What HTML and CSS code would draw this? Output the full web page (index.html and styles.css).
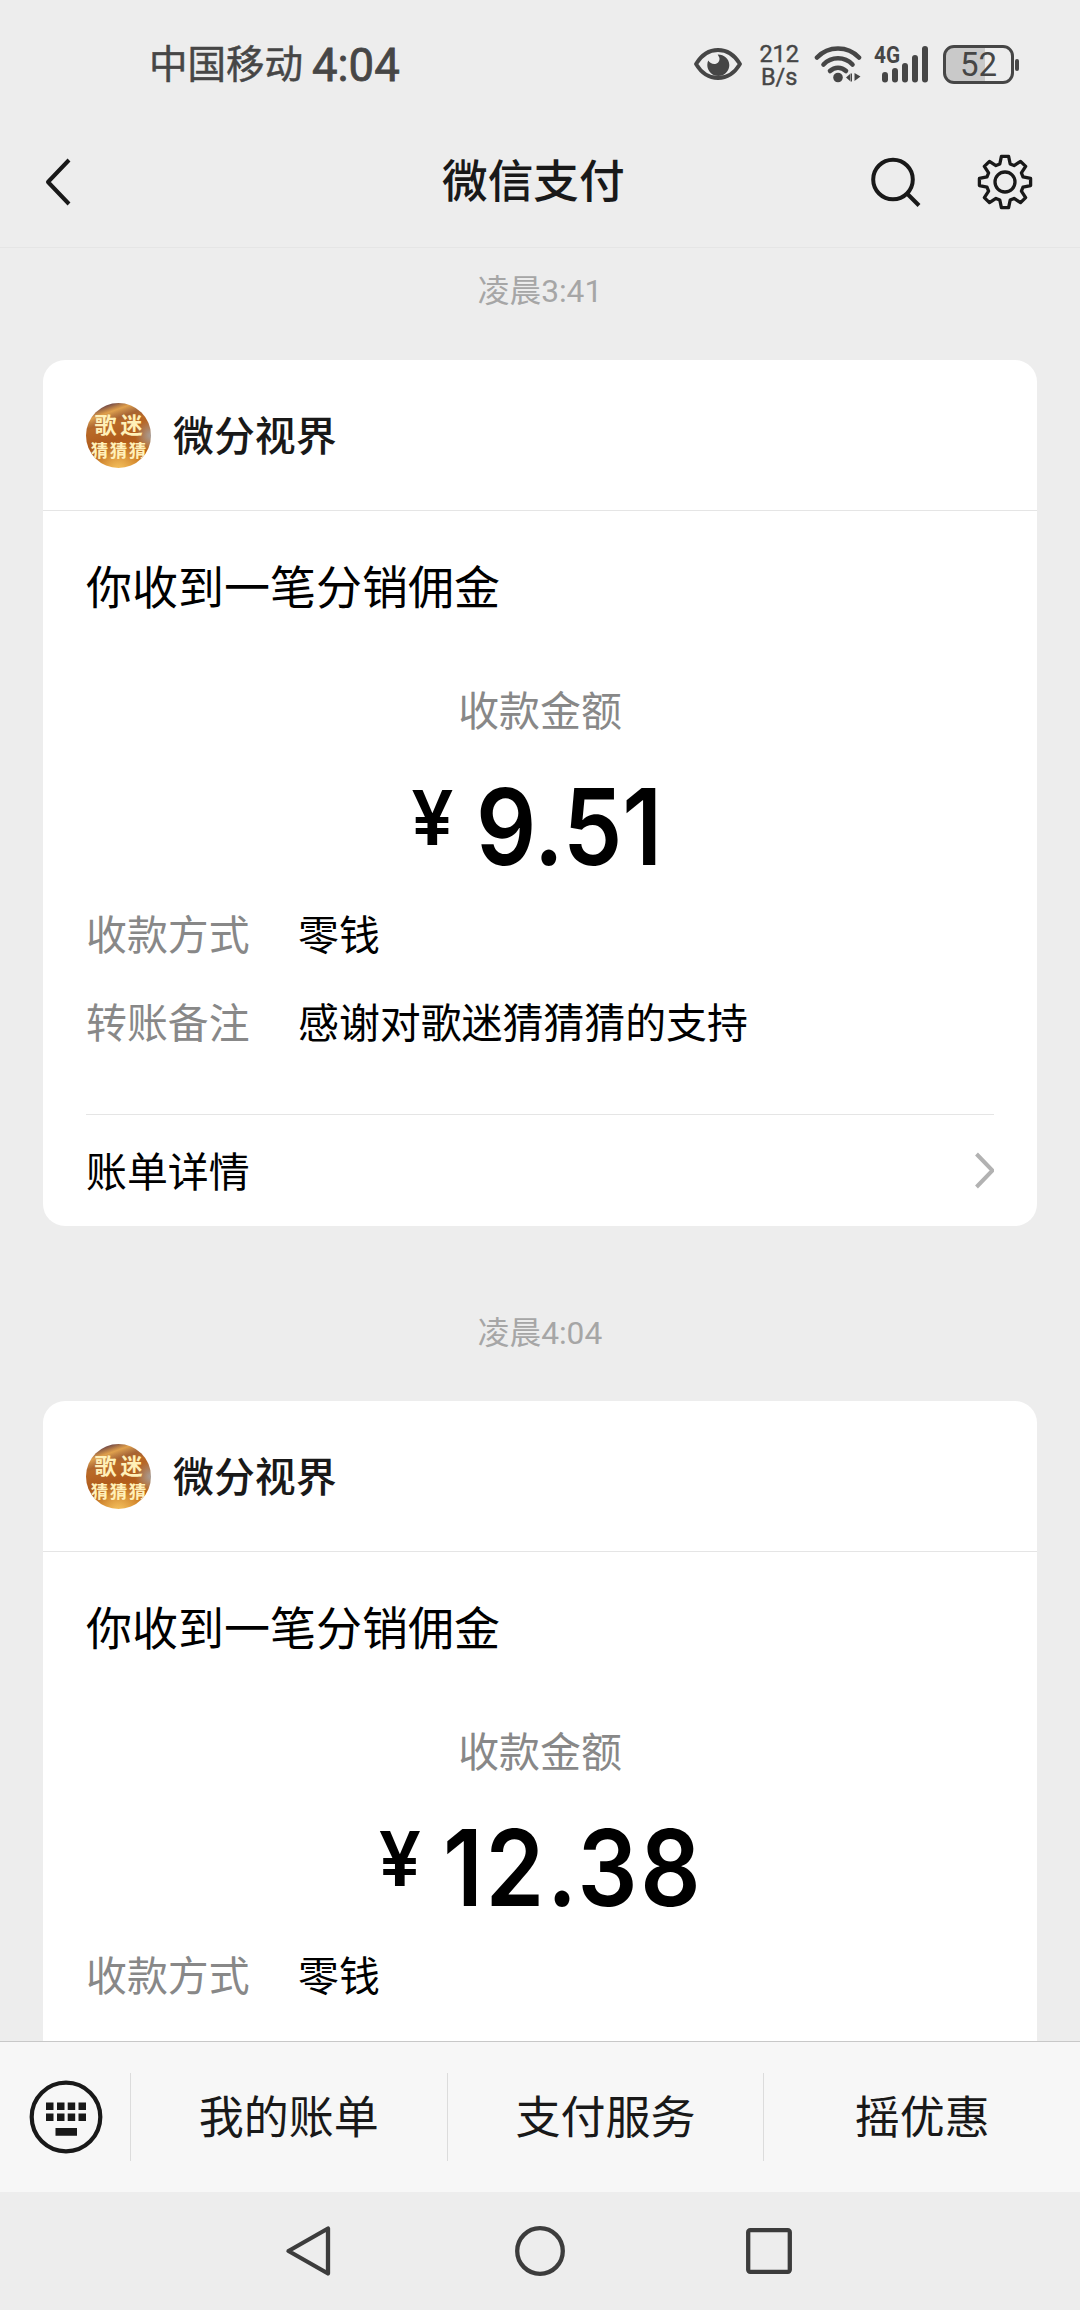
FILE: index.html
```html
<!DOCTYPE html>
<html lang="zh-CN">
<head>
<meta charset="utf-8">
<title>微信支付</title>
<link rel="stylesheet" href="styles.css">
</head>
<body>
<div class="screen">
  <div class="status-bar">
    <span class="carrier">中国移动</span>
    <span class="clock">4:04</span>
    <div class="status-icons">
      <svg class="eye" width="48" height="34" viewBox="0 0 48 34"><path d="M2 17C8 7 15 3 24 3s16 4 22 14c-6 10-13 14-22 14S8 27 2 17z" fill="none" stroke="#464646" stroke-width="3.8" stroke-linejoin="round"/><path d="M24 7.500c-1 0 1.500 2 1.500 4.200 0 3.300-2.600 5.300-5.300 5.300-2.400 0-4.500-1.300-6-3.500-.6 1.600-.9 3-.9 4.500a11 11 0 0 0 22 0C35.300 12 30 7.500 24 7.500z" fill="#464646"/></svg>
      <div class="speed"><span>212</span><span>B/s</span></div>
      <svg class="wifi" width="50" height="38" viewBox="0 0 50 38"><g fill="none" stroke="#464646" stroke-width="4.600" stroke-linecap="round"><path d="M3 12.500a29 29 0 0 1 42 0"/><path d="M9.500 19.500a20 20 0 0 1 29 0"/><path d="M16 26a11.500 11.500 0 0 1 16 0"/></g><circle cx="24" cy="32.500" r="4.800" fill="#464646"/><path d="M32 32.500l4-3.500v7zM38 28.500v8h-1.500v-8zM40.500 28l6 3.500-6 4.500z" fill="#464646"/></svg>
      <div class="signal">
        <span class="net">4G</span>
        <svg width="47" height="37" viewBox="0 0 47 37"><g stroke="#464646" stroke-width="6" stroke-linecap="round"><path d="M3 29v4.500M13 25v8.500M23 20v13.500M33 12v21.500M43 3v30.500"/></g></svg>
      </div>
      <div class="battery"><span>52</span></div>
    </div>
  </div>

  <header class="nav-bar">
    <svg class="back" width="28" height="50" viewBox="0 0 28 50"><path d="M25 3L4 25l21 22" fill="none" stroke="#191919" stroke-width="4" stroke-linejoin="round"/></svg>
    <h1>微信支付</h1>
    <svg class="search" width="54" height="54" viewBox="0 0 54 54"><circle cx="24" cy="24.500" r="19.800" fill="none" stroke="#191919" stroke-width="4"/><path d="M38 38.500l12 12" stroke="#191919" stroke-width="4"/></svg>
    <svg class="gear" width="58" height="58" viewBox="-29 -29 58 58"><g fill="none" stroke="#191919" stroke-width="3.300" stroke-linejoin="round"><path d="M-5.200-18L-3.600-25.600H3.600L5.200-18 9.050-16.400 15.560-20.650 20.650-15.560 16.400-9.050 18-5.200 25.600-3.600V3.600L18 5.200 16.400 9.050 20.650 15.560 15.560 20.650 9.050 16.400 5.200 18 3.600 25.600H-3.600L-5.200 18-9.050 16.400-15.560 20.650-20.650 15.560-16.400 9.050-18 5.200-25.600 3.600V-3.600L-18-5.200-16.400-9.050-20.650-15.560-15.560-20.650-9.050-16.400z"/><circle r="10"/></g></svg>
  </header>

  <main class="chat">
    <div class="time">凌晨3:41</div>
    <section class="card">
      <div class="merchant"><div class="avatar"><span>歌迷</span><span class="avatar-sub">猜猜猜</span></div><h2>微分视界</h2></div>
      <p class="desc">你收到一笔分销佣金</p>
      <p class="label-amount">收款金额</p>
      <div class="amount"><span class="yen">¥</span><span class="digits">9.51</span></div>
      <dl class="rows">
        <dt>收款方式</dt><dd>零钱</dd>
        <dt>转账备注</dt><dd>感谢对歌迷猜猜猜的支持</dd>
      </dl>
      <div class="detail"><span>账单详情</span><svg width="20" height="38" viewBox="0 0 20 38"><path d="M2.500 3l16 16.500L2.500 36" fill="none" stroke="#b2b2b2" stroke-width="4"/></svg></div>
    </section>
    <div class="time later">凌晨4:04</div>
    <section class="card">
      <div class="merchant"><div class="avatar"><span>歌迷</span><span class="avatar-sub">猜猜猜</span></div><h2>微分视界</h2></div>
      <p class="desc">你收到一笔分销佣金</p>
      <p class="label-amount">收款金额</p>
      <div class="amount"><span class="yen">¥</span><span class="digits wide">12.38</span></div>
      <dl class="rows">
        <dt>收款方式</dt><dd>零钱</dd>
      </dl>
    </section>
  </main>

  <footer class="menu">
    <div class="keyboard"><svg width="74" height="74" viewBox="0 0 74 74"><circle cx="37" cy="37" r="34.300" fill="none" stroke="#191919" stroke-width="4.200"/><path d="M17 22.500h7.500v7.500H17zM28 22.500h7.500v7.500H28zM38.700 22.500h7.500v7.500h-7.500zM49.500 22.500H57v7.500h-7.500zM17 33.500h7.500v7.500H17zM28 33.500h7.500v7.500H28zM38.700 33.500h7.500v7.500h-7.500zM49.500 33.500H57v7.500h-7.500zM26.500 48H48v7.800H26.500z" fill="#191919"/></svg></div>
    <div class="menu-item">我的账单</div>
    <div class="menu-item">支付服务</div>
    <div class="menu-item">摇优惠</div>
  </footer>

  <div class="system-nav">
    <svg width="52" height="52" viewBox="0 0 52 52"><path d="M43 3.500v45L3.500 26z" fill="none" stroke="#3c3c3c" stroke-width="4.300" stroke-linejoin="round"/></svg>
    <svg width="52" height="52" viewBox="0 0 52 52"><circle cx="26" cy="26" r="22.800" fill="none" stroke="#3c3c3c" stroke-width="4.300"/></svg>
    <svg width="52" height="52" viewBox="0 0 52 52"><rect x="5.200" y="5.200" width="41.600" height="41.600" rx="2" fill="none" stroke="#3c3c3c" stroke-width="4.300"/></svg>
  </div>
</div>
</body>
</html>
```
FILE: styles.css
```css
* { box-sizing: border-box; margin: 0; padding: 0; }
body {
  width: 1080px;
  height: 2310px;
  overflow: hidden;
  background: #ededed;
  color: #000;
  font-family: Roboto, "Noto Sans CJK SC", sans-serif;
}
svg { display: block; flex: none; }
.screen { display: flex; flex-direction: column; height: 2310px; }

.status-bar { display: flex; align-items: center; height: 128px; padding-left: 149px; color: #464646; }
.carrier { width: 163px; padding-top: 2px; font-size: 38.5px; line-height: 128px; white-space: nowrap; -webkit-text-stroke: 0.5px #464646; }
.clock { padding-top: 4px; font-size: 45.5px; font-weight: 400; line-height: 126px; -webkit-text-stroke: 0.8px #464646; }
.status-icons { display: flex; align-items: center; margin-left: auto; padding-right: 66px; }
.speed { display: flex; flex-direction: column; align-items: center; margin: 3px 15px 0 17px; font-size: 23.5px; line-height: 22.5px; -webkit-text-stroke: 0.4px #464646; }
.signal { display: flex; position: relative; margin: 0 14px 0 18px; }
.net { position: absolute; left: -8px; top: -1px; font-size: 23px; line-height: 22px; font-weight: 700; transform: scaleX(0.9); transform-origin: left; }
.battery {
  position: relative;
  width: 71px;
  height: 39px;
  border: 3px solid #464646;
  border-radius: 11px;
  background: linear-gradient(to right, #c9c9c9 60%, transparent 60%);
  font-size: 33px;
  line-height: 34px;
  text-align: center;
}
.battery::after { content: ""; position: absolute; left: 69px; top: 11px; width: 4px; height: 12px; border-radius: 2px; background: #464646; }

.nav-bar { display: flex; align-items: center; height: 120px; padding-bottom: 11px; border-bottom: 1px solid #e5e5e5; }
.back { margin-left: 44px; }
.nav-bar h1 { width: 186px; margin-left: 370px; padding-top: 2px; font-size: 45.7px; line-height: 60px; font-weight: 500; color: #191919; white-space: nowrap; }
.search { margin-left: 241px; }
.gear { margin-left: 53px; }

.chat { flex: 1; min-height: 0; overflow: hidden; padding: 0 43px; }
.time { height: 112px; padding-top: 22px; text-align: center; font-size: 31.7px; line-height: 44px; color: #a6a6a6; }
.time.later { height: 175px; padding-top: 86px; }
.card { height: 866px; border-radius: 22px; background: #fff; }
.merchant { display: flex; align-items: center; height: 151px; padding-left: 43px; border-bottom: 1px solid #e5e5e5; }
.merchant h2 { margin-left: 22px; padding-top: 3px; font-size: 40.9px; line-height: 60px; font-weight: 500; color: #191919; }
.avatar {
  display: flex;
  flex-direction: column;
  align-items: center;
  width: 65px;
  height: 65px;
  padding-top: 10px;
  overflow: hidden;
  border-radius: 50%;
  background:
    linear-gradient(160deg, transparent 12%, #e0a04c 20%, transparent 30%),
    radial-gradient(circle at 100% 50%, #a9a09a 0, transparent 22%),
    radial-gradient(circle at 50% 105%, #f8c763 0, transparent 40%),
    linear-gradient(165deg, #74504f 5%, #b96a28 35%, #b05c1c 55%, #cc7414 100%);
  color: #fff0b8;
  font-weight: 700;
  font-size: 22px;
  line-height: 25px;
  letter-spacing: 4px;
  text-indent: 4px;
  white-space: nowrap;
}
.avatar-sub { margin-top: 1px; font-size: 17.5px; line-height: 24px; letter-spacing: 1.5px; text-indent: 1.5px; }
.desc { padding: 43px 43px 0; font-size: 46px; line-height: 68px; }
.label-amount { margin-top: 60px; text-align: center; font-size: 40.9px; line-height: 60px; color: #888; }
.amount { display: flex; justify-content: center; height: 110px; margin-top: 30px; font-family: Inter, sans-serif; font-weight: 600; line-height: 110px; }
.yen { margin-right: 22px; font-size: 75px; line-height: 92px; }
.digits { margin-right: -16px; font-size: 106px; transform: scaleX(0.89); transform-origin: left; }
.digits.wide { margin-right: -34px; letter-spacing: 3px; }
.rows { display: grid; grid-template-columns: 212px auto; row-gap: 28px; padding: 24px 43px 0; font-size: 40.9px; line-height: 60px; }
.rows dt { color: #888; }
.detail { display: flex; align-items: center; justify-content: space-between; height: 111px; margin: 60px 43px 0; padding-bottom: 1px; border-top: 1px solid #e5e5e5; font-size: 40.9px; }

.menu { display: flex; align-items: center; height: 151px; border-top: 1px solid #c8c8c8; background: #f7f7f7; }
.keyboard { width: 130px; padding-left: 28.5px; }
.menu-item { flex: 1; height: 88px; border-left: 1px solid #dcdcdc; text-align: center; font-size: 45px; line-height: 92px; color: #191919; }
.system-nav { display: flex; justify-content: center; gap: 177px; height: 118px; padding-top: 33px; }
```
